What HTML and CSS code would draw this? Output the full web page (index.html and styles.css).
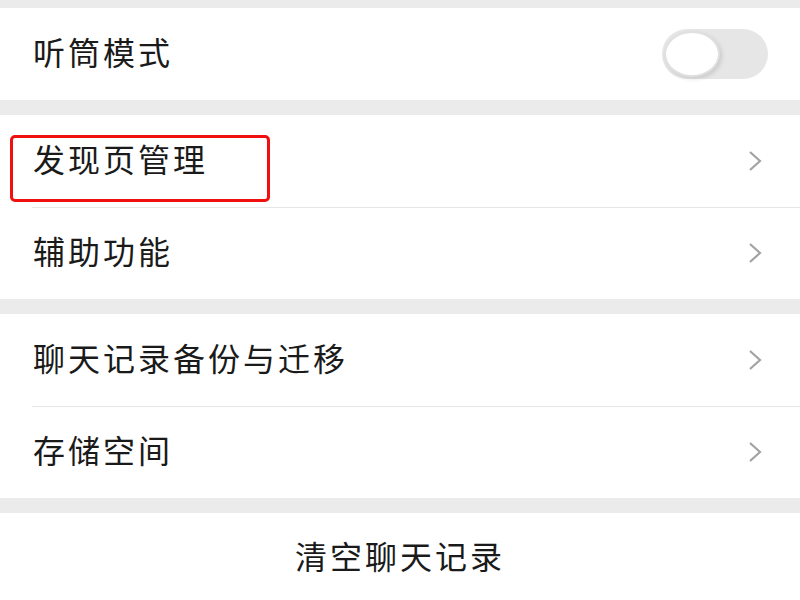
FILE: index.html
```html
<!DOCTYPE html>
<html lang="zh-CN">
<head>
  <meta charset="UTF-8">
  <meta name="viewport" content="width=device-width, initial-scale=1.0">
  <title>设置</title>
  <link rel="stylesheet" href="styles.css">
</head>
<body>

  <!-- 听筒模式 -->
  <div class="group">
    <div class="row">
      <span class="label">听筒模式</span>
      <div class="switch"><div class="knob"></div></div>
    </div>
  </div>

  <!-- 发现页 / 辅助 -->
  <div class="group">
    <div class="row marked">
      <span class="label">发现页管理</span>
      <svg class="chevron" viewBox="0 0 14 22"><path d="M2 2 L12 11 L2 20" /></svg>
      <div class="mark"></div>
    </div>
    <div class="row">
      <span class="label">辅助功能</span>
      <svg class="chevron" viewBox="0 0 14 22"><path d="M2 2 L12 11 L2 20" /></svg>
    </div>
  </div>

  <!-- 聊天记录 -->
  <div class="group">
    <div class="row">
      <span class="label">聊天记录备份与迁移</span>
      <svg class="chevron" viewBox="0 0 14 22"><path d="M2 2 L12 11 L2 20" /></svg>
    </div>
    <div class="row">
      <span class="label">存储空间</span>
      <svg class="chevron" viewBox="0 0 14 22"><path d="M2 2 L12 11 L2 20" /></svg>
    </div>
  </div>

  <div class="group">
    <div class="row action">
      <span class="label">清空聊天记录</span>
    </div>
  </div>

</body>
</html>
```

FILE: styles.css
```css
/* Global */
body {
  margin: 0;
  padding: 8px 0 0;
  background-color: #ebebeb;
  font-family: "Noto Sans CJK SC", "Noto Sans", sans-serif;
  color: #1a1a1a;
  height: 600px;
  box-sizing: border-box;
  overflow: hidden;
}

/* Groups */
.group {
  background-color: #fff;
  margin-bottom: 15px;
}

.group:last-child {
  margin-bottom: 0;
  height: 100px;
}

/* Rows */
.row {
  position: relative;
  display: flex;
  align-items: center;
  justify-content: space-between;
  height: 92px;
  padding: 0 38px 0 33px;
}

.row + .row::before {
  content: "";
  position: absolute;
  top: 0;
  left: 32px;
  right: 0;
  border-top: 1px solid #e6e6e6;
}

.label {
  font-size: 32px;
  letter-spacing: 3px;
  margin-bottom: 6px;
}

.chevron {
  width: 14px;
  height: 22px;
  fill: none;
  stroke: #a3a3a3;
  stroke-width: 2.2;
}

/* Toggle */
.switch {
  width: 106px;
  height: 50px;
  border-radius: 25px;
  background-color: #e6e6e6;
  margin-right: -6px;
  display: flex;
  align-items: center;
  padding-left: 2px;
  box-sizing: border-box;
}

.knob {
  width: 56px;
  height: 46px;
  border-radius: 50%;
  background-color: #fff;
  border: 2px solid #e0e0e0;
  box-sizing: border-box;
  box-shadow: 2px 2px 4px rgba(0, 0, 0, 0.12);
}

/* Red annotation box */
.mark {
  position: absolute;
  left: 10px;
  top: 20px;
  width: 260px;
  height: 67px;
  border: 3px solid #f01010;
  border-radius: 5px;
  box-sizing: border-box;
}

/* Clear button */
.action {
  justify-content: center;
  height: 90px;
  padding: 0;
}
```
